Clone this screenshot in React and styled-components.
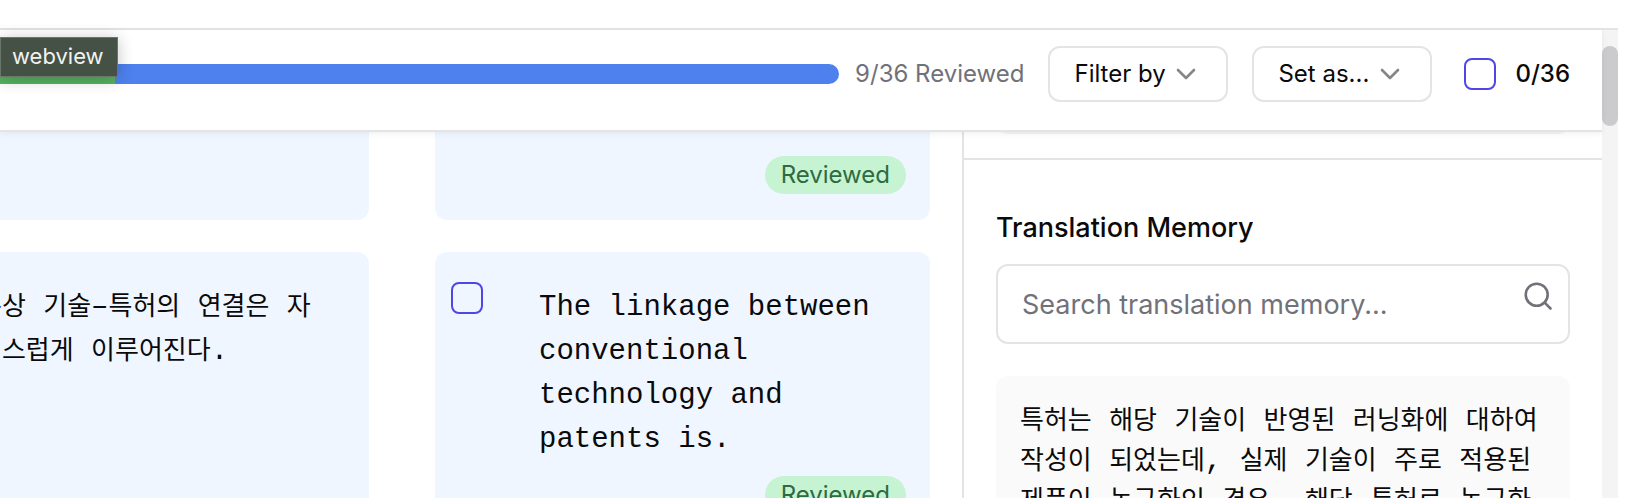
import React from "react";
import styled, { createGlobalStyle } from "styled-components";

const GlobalStyle = createGlobalStyle`
  *, *::before, *::after { box-sizing: border-box; }
  body {
    margin: 0;
    background: #fff;
    color: #0a0a0b;
    font-family: Inter, "Liberation Sans", "Noto Sans CJK KR", sans-serif;
    font-size: 24px;
    line-height: 32px;
  }
`;

const Page = styled.div`
  display: flex;
  flex-direction: column;
  height: 100vh;
  overflow: hidden;
  padding: 28px 26px 0 0;
`;

const Frame = styled.div`
  display: flex;
  flex: 1;
  min-height: 0;
  border-top: 2px solid #e4e4e4;
`;

const Workspace = styled.div`
  display: flex;
  flex: 1;
  flex-direction: column;
  min-width: 0;
`;

const ScrollTrack = styled.div`
  width: 16px;
  padding-top: 16px;
  background: #f4f4f4;
`;

const ScrollThumb = styled.div`
  height: 80px;
  border-radius: 8px;
  background: #cbcbcd;
`;

const Toolbar = styled.header`
  position: relative;
  z-index: 1;
  display: flex;
  align-items: center;
  gap: 24px;
  padding: 16px 32px 28px 0;
  border-bottom: 2px solid #e4e4e4;
  background: #fff;
  box-shadow: 0 2px 6px rgba(0, 0, 0, 0.06);
`;

const Progress = styled.div`
  display: flex;
  flex: 1;
  align-items: center;
  gap: 16px;
  color: #71717a;
  white-space: nowrap;
`;

const Track = styled.div`
  flex: 1;
  height: 20px;
  overflow: hidden;
  border-radius: 0 10px 10px 0;
  background: #4e81ee;
`;

const Fill = styled.div`
  width: 115px;
  height: 100%;
  background: #56b35f;
`;

const Tooltip = styled.div`
  position: absolute;
  top: 7px;
  left: 0;
  padding: 2px 13px 4px 11px;
  border: 1px solid #6b766b;
  background: #445144;
  box-shadow: 0 2px 16px rgba(0, 0, 0, 0.24);
  color: #f2f2f2;
  font-size: 22px;
`;

const SelectBox = styled.div`
  position: relative;
  width: 180px;

  svg {
    position: absolute;
    top: 22px;
    right: 32px;
    pointer-events: none;
  }
`;

const Select = styled.select`
  display: block;
  width: 100%;
  height: 56px;
  padding: 0 24px;
  appearance: none;
  border: 2px solid #e4e4e4;
  border-radius: 12px;
  background: #fff;
  color: inherit;
  font: inherit;
`;

const CountLabel = styled.label`
  display: flex;
  align-items: center;
  gap: 19px;
  margin-left: 8px;
  font-weight: 500;
`;

const Checkbox = styled.input`
  flex: none;
  width: 32px;
  height: 32px;
  margin: 0;
  appearance: none;
  border: 2px solid #4f46e5;
  border-radius: 8px;
`;

const Body = styled.div`
  display: flex;
  flex: 1;
  min-height: 0;
`;

const Segments = styled.main`
  display: grid;
  flex: 1;
  grid-template-columns: 1fr 1fr;
  align-content: start;
  gap: 32px 66px;
  margin-left: -126px;
  padding-right: 32px;
`;

const Segment = styled.section`
  display: flex;
  flex-direction: column;
  padding: ${(p) => (p.$tail ? "24px 24px 26px 16px" : "30px 24px 26px 16px")};
  border-radius: ${(p) => (p.$tail ? "0 0 12px 12px" : "12px")};
  background: #eff6ff;
`;

const SegmentRow = styled.div`
  display: flex;
  align-items: flex-start;
  gap: 56px;
`;

const SegmentText = styled.p`
  flex: 1;
  margin: 4px 16px 14px 0;
  font-family: "Liberation Mono", "Noto Sans CJK KR", monospace;
  font-size: 29px;
  line-height: 44px;
`;

const Badge = styled.span`
  align-self: flex-end;
  padding: 3px 16px;
  border-radius: 19px;
  background: #c6f4d3;
  color: #2f6b40;
`;

const Sidebar = styled.aside`
  flex: none;
  width: 640px;
  border-left: 2px solid #e4e4e4;
`;

const GlossaryEnd = styled.div`
  display: flex;
  align-items: flex-start;
  height: 28px;
  padding: 0 32px;
  border-bottom: 2px solid #e4e4e4;

  &::before {
    content: "";
    flex: 1;
    height: 14px;
    margin-top: -12px;
    border-radius: 0 0 12px 12px;
    background: #f4f4f4;
  }
`;

const Memory = styled.section`
  padding: 52px 32px 0;
`;

const MemoryTitle = styled.h2`
  margin: 0 0 20px;
  font-size: 27px;
  font-weight: 500;
  line-height: 32px;
`;

const SearchBox = styled.div`
  position: relative;
  margin-bottom: 32px;

  svg {
    position: absolute;
    top: 16px;
    right: 16px;
    pointer-events: none;
  }
`;

const SearchInput = styled.input`
  display: block;
  width: 100%;
  height: 80px;
  padding: 0 64px 0 24px;
  border: 2px solid #e4e4e4;
  border-radius: 12px;
  background: #fff;
  color: inherit;
  font: inherit;
  font-size: 27px;

  &::placeholder {
    color: #71717a;
    opacity: 1;
  }
`;

const MemoryEntry = styled.p`
  margin: 0;
  padding: 26px 24px;
  border-radius: 12px;
  background: #fafafa;
  font-family: "Liberation Mono", "Noto Sans CJK KR", monospace;
  font-size: 29px;
  line-height: 40px;
`;

const Hangul = styled.span`
  font-family: "Noto Sans CJK KR", sans-serif;
  font-size: 26px;
  line-height: 1;
`;

/* Hangul is set a little smaller than the monospaced Latin around it. */
function Mixed({ text }) {
  return text
    .split(/([\uac00-\ud7a3]+)/)
    .map((part, i) => (i % 2 ? <Hangul key={i} lang="ko">{part}</Hangul> : part));
}

function Chevron() {
  return (
    <svg width="20" height="12" viewBox="0 0 20 12" fill="none" aria-hidden="true">
      <path d="M2 2l8 8 8-8" stroke="#868686" strokeWidth="2.6" strokeLinecap="round" strokeLinejoin="round" />
    </svg>
  );
}

function Dropdown({ label }) {
  return (
    <SelectBox>
      <Select aria-label={label}>
        <option>{label}</option>
      </Select>
      <Chevron />
    </SelectBox>
  );
}

export default function App() {
  return (
    <Page>
      <GlobalStyle />
      <Frame>
        <Workspace>
          <Toolbar>
            <Progress>
              <Track>
                <Fill />
              </Track>
              <span>9/36 Reviewed</span>
            </Progress>
            <Dropdown label="Filter by" />
            <Dropdown label="Set as..." />
            <CountLabel>
              <Checkbox type="checkbox" />
              0/36
            </CountLabel>
            <Tooltip role="tooltip">webview</Tooltip>
          </Toolbar>
          <Body>
            <Segments>
              <Segment $tail />
              <Segment $tail>
                <Badge>Reviewed</Badge>
              </Segment>
              <Segment>
                <SegmentRow>
                  <Checkbox type="checkbox" aria-label="Select source segment" />
                  <SegmentText>
                    <Mixed text="통상 기술–특허의 연결은 자연스럽게 이루어진다." />
                  </SegmentText>
                </SegmentRow>
              </Segment>
              <Segment>
                <SegmentRow>
                  <Checkbox type="checkbox" aria-label="Select translated segment" />
                  <SegmentText>
                    The linkage between conventional technology and patents is.
                  </SegmentText>
                </SegmentRow>
                <Badge>Reviewed</Badge>
              </Segment>
            </Segments>
            <Sidebar>
              <GlossaryEnd />
              <Memory>
                <MemoryTitle>Translation Memory</MemoryTitle>
                <SearchBox>
                  <SearchInput
                    type="text"
                    aria-label="Search translation memory"
                    placeholder="Search translation memory..."
                  />
                  <svg width="32" height="32" viewBox="0 0 32 32" fill="none" stroke="#71717a" strokeWidth="2.6" strokeLinecap="round" aria-hidden="true">
                    <circle cx="14.7" cy="14.7" r="11" />
                    <path d="M22.7 22.7l5.8 5.8" />
                  </svg>
                </SearchBox>
                <MemoryEntry>
                  <Mixed text="특허는 해당 기술이 반영된 러닝화에 대하여 작성이 되었는데, 실제 기술이 주로 적용된 제품이 농구화인 경우, 해당 특허로 농구화" />
                </MemoryEntry>
              </Memory>
            </Sidebar>
          </Body>
        </Workspace>
        <ScrollTrack>
          <ScrollThumb />
        </ScrollTrack>
      </Frame>
    </Page>
  );
}
